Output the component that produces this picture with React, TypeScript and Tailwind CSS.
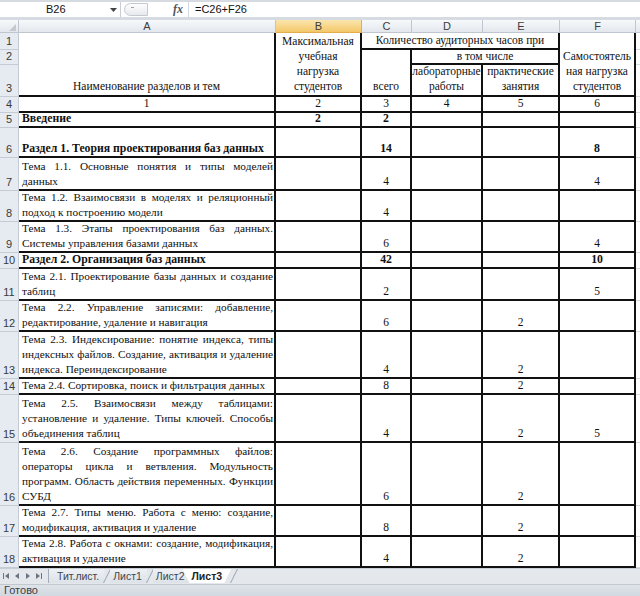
import React from "react";

type Row = {
  n: number;
  a: string[];
  aBold?: boolean;
  aCenter?: boolean;
  vals: (string | null)[];
  valBold?: boolean;
};

const rows: Row[] = [
  { n: 4, a: ["1"], aCenter: true, vals: ["2", "3", "4", "5", "6"] },
  { n: 5, a: ["Введение"], aBold: true, vals: ["2", "2", null, null, null], valBold: true },
  { n: 6, a: ["Раздел 1. Теория проектирования баз данных"], aBold: true, vals: [null, "14", null, null, "8"], valBold: true },
  { n: 7, a: ["Тема 1.1. Основные понятия и типы моделей", "данных"], vals: [null, "4", null, null, "4"] },
  { n: 8, a: ["Тема 1.2. Взаимосвязи в моделях и реляционный", "подход к построению модели"], vals: [null, "4", null, null, null] },
  { n: 9, a: ["Тема 1.3. Этапы проектирования баз данных.", "Системы управления базами данных"], vals: [null, "6", null, null, "4"] },
  { n: 10, a: ["Раздел 2. Организация баз данных"], aBold: true, vals: [null, "42", null, null, "10"], valBold: true },
  { n: 11, a: ["Тема 2.1. Проектирование базы данных и создание", "таблиц"], vals: [null, "2", null, null, "5"] },
  { n: 12, a: ["Тема 2.2. Управление записями: добавление,", "редактирование, удаление и навигация"], vals: [null, "6", null, "2", null] },
  { n: 13, a: ["Тема 2.3. Индексирование: понятие индекса, типы", "индексных файлов. Создание, активация и удаление", "индекса. Переиндексирование"], vals: [null, "4", null, "2", null] },
  { n: 14, a: ["Тема 2.4. Сортировка, поиск и фильтрация данных"], vals: [null, "8", null, "2", null] },
  { n: 15, a: ["Тема 2.5. Взаимосвязи между таблицами:", "установление и удаление. Типы ключей. Способы", "объединения таблиц"], vals: [null, "4", null, "2", "5"] },
  { n: 16, a: ["Тема 2.6. Создание программных файлов:", "операторы цикла и ветвления. Модульность", "программ. Область действия переменных. Функции", "СУБД"], vals: [null, "6", null, "2", null] },
  { n: 17, a: ["Тема 2.7. Типы меню. Работа с меню: создание,", "модификация, активация и удаление"], vals: [null, "8", null, "2", null] },
  { n: 18, a: ["Тема 2.8. Работа с окнами: создание, модификация,", "активация и удаление"], vals: [null, "4", null, "2", null] },
];

const rowHead =
  "flex items-end justify-center pb-[1px] bg-[#e6ebf1] border-r border-b border-[#c4cbd5] text-[11px] leading-[14px] text-[#3a3a3a] font-['Liberation_Sans',Arial,sans-serif]";
const colHead =
  "flex items-center justify-center bg-linear-to-b from-[#f7f9fb] to-[#e3e7ed] border-r border-b border-[#bfc6d0] text-[11px] leading-[13px] text-[#3c3c3c] font-['Liberation_Sans',Arial,sans-serif]";
const cell = "border-r-2 border-b-2 border-[#111]";
const gCell = "border-b border-[#d6dce4] bg-white";
const center = "flex flex-col items-center justify-end text-center";

function Lines({ lines }: { lines: string[] }) {
  return (
    <>
      {lines.map((l, i) => (
        <div key={i} className="whitespace-nowrap">
          {l}
        </div>
      ))}
    </>
  );
}

function ALines({ lines }: { lines: string[] }) {
  return (
    <>
      {lines.map((l, i) =>
        i < lines.length - 1 ? (
          <div key={i} className="whitespace-nowrap text-justify [text-align-last:justify]">
            {l}
          </div>
        ) : (
          <div key={i} className="whitespace-nowrap">
            {l}
          </div>
        )
      )}
    </>
  );
}

function Arrow({ dir }: { dir: "first" | "prev" | "next" | "last" }) {
  return (
    <svg width="8" height="8" viewBox="0 0 8 8" className="block">
      {dir === "first" && (
        <>
          <rect x="1" y="1" width="1" height="6" fill="#6c7482" />
          <path d="M7 1 L3 4 L7 7 Z" fill="#6c7482" />
        </>
      )}
      {dir === "prev" && <path d="M6 1 L2 4 L6 7 Z" fill="#6c7482" />}
      {dir === "next" && <path d="M2 1 L6 4 L2 7 Z" fill="#6c7482" />}
      {dir === "last" && (
        <>
          <path d="M1 1 L5 4 L1 7 Z" fill="#6c7482" />
          <rect x="6" y="1" width="1" height="6" fill="#6c7482" />
        </>
      )}
    </svg>
  );
}

function Slash() {
  return (
    <svg width="8" height="14" viewBox="0 0 8 14" className="block -mx-[1px]">
      <path d="M0.5 14 L7.5 0" stroke="#9aa3af" strokeWidth="1" fill="none" />
    </svg>
  );
}

export default function App() {
  return (
    <div className="w-[640px] h-[596px] overflow-hidden flex flex-col bg-white">
      {/* Formula bar */}
      <div className="h-[20px] shrink-0 bg-[#d6dbe1] pt-[2px] pb-[3px]">
        <div className="flex h-[15px] bg-white items-center font-['Liberation_Sans',Arial,sans-serif] text-[11px] text-[#111]">
          <div className="w-[121px] h-full flex items-center border-r border-[#c9ced6]">
            <span className="pl-[46px]">B26</span>
            <svg width="7" height="4" viewBox="0 0 7 4" className="ml-auto mr-[3px]">
              <path d="M0 0 L7 0 L3.5 4 Z" fill="#444" />
            </svg>
          </div>
          <div className="ml-[3px] w-[24px] h-[13px] rounded-l-full border border-[#c3c9d1] bg-linear-to-b from-[#fdfdfe] to-[#e7eaee] flex items-center pl-[6px]">
            <div className="w-[3px] h-[1px] bg-[#9aa2ad] -mt-[4px]" />
          </div>
          <div className="ml-[25px] w-[15px] text-[12px] italic font-bold text-[#555] font-['Liberation_Serif',serif] leading-[13px]">
            fx
          </div>
          <div className="w-[1px] h-[15px] bg-[#d3d8df]" />
          <span className="pl-[6px]">=C26+F26</span>
        </div>
      </div>

      {/* Sheet grid */}
      <div className="grid shrink-0 grid-cols-[19px_257px_86px_50px_71px_77px_76px_4px] grid-rows-[13px_17px_15px_32px_16px_15px_30px_33px_31px_31px_16px_32px_31px_47px_16px_48px_63px_31px_31px] font-['Liberation_Serif','Times_New_Roman',serif] text-[11.25px] leading-[15px] text-[#111]">
        {/* column headers */}
        <div className="relative bg-linear-to-b from-[#f7f9fb] to-[#e3e7ed] border-r border-b border-[#bfc6d0]">
          <svg width="7" height="7" viewBox="0 0 7 7" className="absolute right-[2px] bottom-[1px]">
            <path d="M7 0 L7 7 L0 7 Z" fill="#c4c9d0" />
          </svg>
        </div>
        <div className={colHead}>A</div>
        <div className="flex items-center justify-center bg-linear-to-b from-[#fbe6ad] to-[#f3c767] border-r border-b border-[#e2ad4f] text-[11px] leading-[13px] text-[#3c3c3c] font-['Liberation_Sans',Arial,sans-serif]">
          B
        </div>
        <div className={colHead}>C</div>
        <div className={colHead}>D</div>
        <div className={colHead}>E</div>
        <div className={colHead}>F</div>
        <div className="bg-linear-to-b from-[#f7f9fb] to-[#e3e7ed] border-b border-[#bfc6d0]" />

        {/* row 1 */}
        <div className={rowHead}>1</div>
        <div className={`${cell} row-span-3 ${center} pb-[1px] text-[11.5px]`}>Наименование разделов и тем</div>
        <div className={`${cell} row-span-3 ${center} pb-[1px] text-[11.5px]`}>
          <Lines lines={["Максимальная", "учебная", "нагрузка", "студентов"]} />
        </div>
        <div className={`${cell} col-span-3 flex items-center justify-center text-[11.5px]`}>
          Количество аудиторных часов при
        </div>
        <div className={`${cell} row-span-3 ${center} pb-[1px] text-[11.5px]`}>
          <Lines lines={["Самостоятель", "ная нагрузка", "студентов"]} />
        </div>
        <div className={gCell} />

        {/* row 2 */}
        <div className={rowHead}>2</div>
        <div className={`${cell} row-span-2 ${center} pb-[1px] text-[11.5px]`}>всего</div>
        <div className={`${cell} col-span-2 flex items-center justify-center text-[11.5px]`}>в том числе</div>
        <div className={gCell} />

        {/* row 3 */}
        <div className={rowHead}>3</div>
        <div className={`${cell} ${center} pb-[1px] text-[11.5px]`}>
          <Lines lines={["лабораторные", "работы"]} />
        </div>
        <div className={`${cell} ${center} pb-[1px] text-[11.5px]`}>
          <Lines lines={["практические", "занятия"]} />
        </div>
        <div className={gCell} />

        {rows.map((r) => (
          <React.Fragment key={r.n}>
            <div className={rowHead}>{r.n}</div>
            {r.aCenter ? (
              <div className={`${cell} ${center} text-[11.5px]`}>{r.a[0]}</div>
            ) : (
              <div
                className={`${cell} overflow-hidden flex flex-col justify-end pl-[3px] pr-[1px] ${
                  r.aBold ? "font-bold text-[11.75px]" : ""
                }`}
              >
                <ALines lines={r.a} />
              </div>
            )}
            {r.vals.map((v, i) => (
              <div
                key={i}
                className={`${cell} ${center} ${r.valBold ? "font-bold text-[11.75px]" : "text-[11.5px]"}`}
              >
                {v ?? ""}
              </div>
            ))}
            <div className={gCell} />
          </React.Fragment>
        ))}
      </div>

      {/* Sheet tabs */}
      <div className="h-[16px] shrink-0 bg-[#e4e8ed] border-t border-[#c8ced6] flex items-start font-['Liberation_Sans',Arial,sans-serif] text-[10.5px] leading-[14px] text-[#3f4650]">
        <div className="w-[48px] h-[14px] flex items-center gap-[3px] pl-[2px]">
          <Arrow dir="first" />
          <Arrow dir="prev" />
          <Arrow dir="next" />
          <Arrow dir="last" />
        </div>
        <div className="w-[1px] h-[14px] bg-[#a3abb6]" />
        <div className="h-[14px] pl-[8px] pr-[5px] bg-linear-to-b from-[#eef1f4] to-[#dde2e8]">Тит.лист.</div>
        <Slash />
        <div className="h-[14px] pl-[3px] pr-[5px] bg-linear-to-b from-[#eef1f4] to-[#dde2e8]">Лист1</div>
        <Slash />
        <div className="h-[14px] pl-[3px] pr-[4px] bg-linear-to-b from-[#eef1f4] to-[#dde2e8]">Лист2</div>
        <div className="h-[14px] -ml-[6px] pl-[9px] pr-[9px] bg-white font-bold text-[#222] [clip-path:polygon(0_0,100%_0,calc(100%-7px)_100%,7px_100%)]">
          Лист3
        </div>
        <Slash />
      </div>

      {/* Status bar */}
      <div className="h-[12px] shrink-0 bg-linear-to-b from-[#dfe3e9] to-[#d2d8e0] border-t border-[#c2c8d0] flex items-center font-['Liberation_Sans',Arial,sans-serif] text-[11px] leading-[11px] text-[#3a3f47]">
        <span className="pl-[4px]">Готово</span>
      </div>
    </div>
  );
}
